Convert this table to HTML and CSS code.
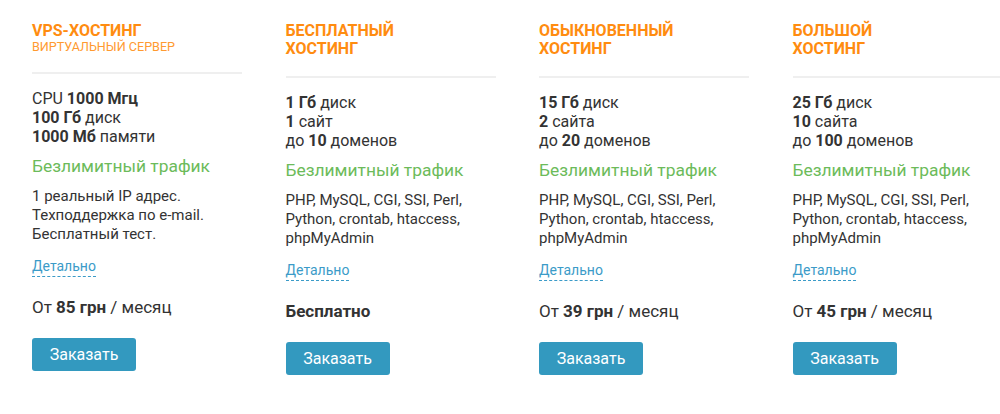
FILE: index.html
```html
<!DOCTYPE html>
<html lang="ru">
<head>
<meta charset="utf-8">
<title>Хостинг</title>
<link rel="stylesheet" href="styles.css">
</head>
<body>
<div class="plans">
  <div class="plan">
    <div class="head">
      <div class="title">VPS-хостинг</div>
      <div class="sub">Виртуальный сервер</div>
    </div>
    <div class="specs">
      <div>CPU <b>1000 Мгц</b></div>
      <div><b>100 Гб</b> диск</div>
      <div><b>1000 Мб</b> памяти</div>
    </div>
    <div class="traffic">Безлимитный трафик</div>
    <div class="info">1 реальный IP адрес.<br>Техподдержка по e-mail.<br>Бесплатный тест.</div>
    <div class="more"><a href="#">Детально</a></div>
    <div class="price">От <b>85 грн</b> / месяц</div>
    <div><button class="order">Заказать</button></div>
  </div>
  <div class="plan">
    <div class="head">
      <div class="title">Бесплатный<br>хостинг</div>
    </div>
    <div class="specs">
      <div><b>1 Гб</b> диск</div>
      <div><b>1</b> сайт</div>
      <div>до <b>10</b> доменов</div>
    </div>
    <div class="traffic">Безлимитный трафик</div>
    <div class="info">PHP, MySQL, CGI, SSI, Perl,<br>Python, crontab, htaccess,<br>phpMyAdmin</div>
    <div class="more"><a href="#">Детально</a></div>
    <div class="price"><b>Бесплатно</b></div>
    <div><button class="order">Заказать</button></div>
  </div>
  <div class="plan">
    <div class="head">
      <div class="title">Обыкновенный<br>хостинг</div>
    </div>
    <div class="specs">
      <div><b>15 Гб</b> диск</div>
      <div><b>2</b> сайта</div>
      <div>до <b>20</b> доменов</div>
    </div>
    <div class="traffic">Безлимитный трафик</div>
    <div class="info">PHP, MySQL, CGI, SSI, Perl,<br>Python, crontab, htaccess,<br>phpMyAdmin</div>
    <div class="more"><a href="#">Детально</a></div>
    <div class="price">От <b>39 грн</b> / месяц</div>
    <div><button class="order">Заказать</button></div>
  </div>
  <div class="plan">
    <div class="head">
      <div class="title">Большой<br>хостинг</div>
    </div>
    <div class="specs">
      <div><b>25 Гб</b> диск</div>
      <div><b>10</b> сайта</div>
      <div>до <b>100</b> доменов</div>
    </div>
    <div class="traffic">Безлимитный трафик</div>
    <div class="info">PHP, MySQL, CGI, SSI, Perl,<br>Python, crontab, htaccess,<br>phpMyAdmin</div>
    <div class="more"><a href="#">Детально</a></div>
    <div class="price">От <b>45 грн</b> / месяц</div>
    <div><button class="order">Заказать</button></div>
  </div>
</div>
</body>
</html>
```

FILE: styles.css
```css
html, body {
  margin: 0;
  padding: 0;
  overflow: hidden;
  background: #ffffff;
}
body {
  font-family: Roboto, "Noto Sans", sans-serif;
  color: #333333;
}
.plans {
  display: grid;
  grid-template-columns: repeat(4, 210px);
  column-gap: 43.5px;
  padding: 22px 0 0 32px;
}
.plan {
  display: flex;
  flex-direction: column;
}
.head {
  padding-bottom: 18px;
  border-bottom: 2px solid #efefef;
}
.title {
  font-size: 16px;
  line-height: 18px;
  font-weight: 700;
  text-transform: uppercase;
  color: #ff8c10;
}
.sub {
  font-size: 12.6px;
  line-height: 14px;
  text-transform: uppercase;
  color: #ff9a30;
}
.specs {
  margin-top: 15px;
  font-size: 16px;
  line-height: 19px;
}
.specs b, .price b {
  font-weight: 700;
}
.traffic {
  margin-top: 9px;
  font-size: 17.4px;
  line-height: 22px;
  color: #6cbb5a;
}
.info {
  margin-top: 10px;
  font-size: 15px;
  line-height: 19px;
}
.more {
  margin-top: 13px;
  font-size: 14px;
  line-height: 19px;
}
.more a {
  display: inline-block;
  color: #3b9bc8;
  text-decoration: none;
  border-bottom: 1px dashed #3b9bc8;
}
.price {
  margin-top: 19px;
  font-size: 17px;
  line-height: 22px;
}
.order {
  margin-top: 20px;
  width: 104px;
  height: 33px;
  padding: 0;
  border: none;
  border-radius: 3px;
  background: #3399bf;
  color: #ffffff;
  font-family: Roboto, "Noto Sans", sans-serif;
  font-size: 16px;
  cursor: pointer;
}
```
